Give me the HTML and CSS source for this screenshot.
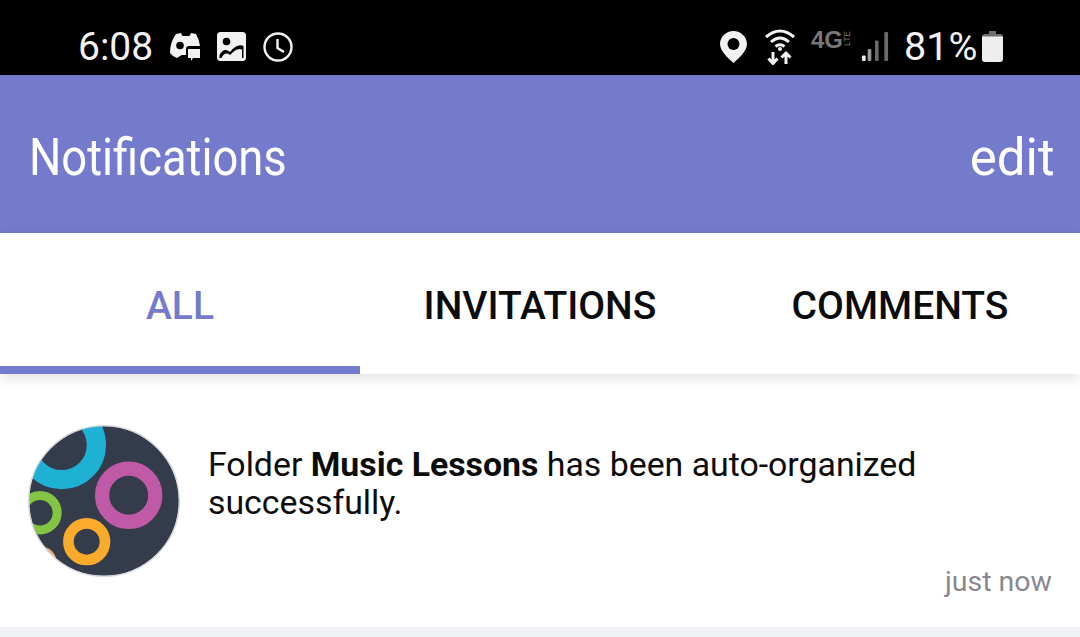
FILE: index.html
```html
<html>
    <head>
        <title>Notifications</title>
        <link rel="stylesheet" href="styles.css">
    </head>
    <body>
        <div class="status-bar">
            <div class="status-left">
                <span class="time">6:08</span>
                <svg class="icon-discord" width="31" height="28" viewBox="0 0 31 28">
                    <path d="M6 1 L11 0 L12.500 3 H19.500 L21 0 L26 1 Q29 6 30 13 H19 Q16 13 16 16 V22 H12 L10 23 L7 25 Q2 23 0 20 Q0 9 6 1Z" fill="#f2f2f2"/>
                    <circle cx="10" cy="12.500" r="3.800" fill="#000"/>
                    <path d="M18 16 H30 V25 H23 L21 28 V25 H18Z" fill="#f2f2f2"/>
                </svg>
                <svg class="icon-image" width="29" height="29" viewBox="0 0 29 29">
                    <rect width="29" height="29" rx="3.500" fill="#f2f2f2"/>
                    <circle cx="9.500" cy="9.500" r="3.800" fill="#000"/>
                    <path d="M2.500 26 V23 Q7 15 13 20 Q20 11 26.500 14 V26Z" fill="#000"/>
                    <path d="M4.500 26 Q8 19 13 23 Q20 15 25 17.500 V26Z" fill="#f2f2f2"/>
                </svg>
                <svg class="icon-clock" width="30" height="30" viewBox="0 0 30 30">
                    <circle cx="15" cy="15" r="13.500" fill="none" stroke="#f2f2f2" stroke-width="2.400"/>
                    <path d="M14.500 7 V16 L21 20" fill="none" stroke="#f2f2f2" stroke-width="2.400"/>
                </svg>
            </div>
            <div class="status-right">
                <svg class="icon-pin" width="27" height="32" viewBox="0 0 27 32">
                    <path d="M13.500 0 C21 0 27 6 27 13 C27 20 19 27 13.500 32 C8 27 0 20 0 13 C0 6 6 0 13.500 0Z" fill="#f2f2f2"/>
                    <circle cx="13.500" cy="13" r="6" fill="#000"/>
                </svg>
                <svg class="icon-wifi" width="30" height="37" viewBox="0 0 30 37">
                    <g fill="none" stroke="#f2f2f2" stroke-width="3">
                        <path d="M1 9 Q15 -3 29 9"/>
                        <path d="M6 14 Q15 6 24 14"/>
                        <path d="M10.500 18.500 Q15 15 19.500 18.500"/>
                    </g>
                    <circle cx="15" cy="21" r="2" fill="#f2f2f2"/>
                    <path d="M8 24 V35 M3.500 30.500 L8 35.500 L12.500 30.500 M21 36 V25 M16.500 29.500 L21 25 L25.500 29.500" fill="none" stroke="#f2f2f2" stroke-width="3"/>
                </svg>
                <div class="network">
                    <span class="network-4g">4G</span>
                    <span class="network-lte">LTE</span>
                </div>
                <svg class="icon-signal" width="27" height="30" viewBox="0 0 27 30">
                    <rect x="0" y="23.500" width="3.600" height="5.500" rx="1" fill="#f2f2f2"/>
                    <rect x="5.700" y="17" width="3.600" height="12" rx="1" fill="#9a9a9a"/>
                    <rect x="13" y="8.500" width="3.600" height="20.500" rx="1" fill="#6a6a6a"/>
                    <rect x="22.300" y="0" width="3.800" height="29" rx="1" fill="#6a6a6a"/>
                </svg>
                <span class="battery-level">81%</span>
                <svg class="icon-battery" width="21" height="31" viewBox="0 0 21 31">
                    <path d="M7 0 H14 V3 H18 Q21 3 21 6 V7 H0 V6 Q0 3 3 3 H7Z" fill="#6e6e6e"/>
                    <path d="M0 5.500 H21 V28 Q21 31 18 31 H3 Q0 31 0 28Z" fill="#eeeeee"/>
                </svg>
            </div>
        </div>
        <div class="app-header">
            <span class="app-title">Notifications</span>
            <span class="app-edit">edit</span>
        </div>
        <div class="tabs">
            <div class="tab tab-active">ALL</div>
            <div class="tab">INVITATIONS</div>
            <div class="tab">COMMENTS</div>
        </div>
        <div class="notification">
            <svg class="avatar" width="152" height="152" viewBox="0 0 152 152">
                <defs>
                    <clipPath id="avatar-clip"><circle cx="76" cy="76" r="75"/></clipPath>
                </defs>
                <g clip-path="url(#avatar-clip)">
                    <rect width="152" height="152" fill="#343b4b"/>
                    <circle cx="33.700" cy="20" r="34.700" fill="none" stroke="#1fb1d3" stroke-width="19.300"/>
                    <circle cx="100.700" cy="70.300" r="26.600" fill="none" stroke="#c05aa6" stroke-width="14.200"/>
                    <circle cx="12" cy="87.700" r="17.200" fill="none" stroke="#84c445" stroke-width="9"/>
                    <circle cx="58.700" cy="116.700" r="18.300" fill="none" stroke="#fbab2c" stroke-width="10.700"/>
                    <circle cx="13" cy="137" r="14" fill="none" stroke="#f4a27a" stroke-width="3"/>
                </g>
                <circle cx="76" cy="76" r="75.300" fill="none" stroke="#d5d8dc" stroke-width="1.400"/>
            </svg>
            <div class="notification-body">
                <p class="notification-text">Folder <b>Music Lessons</b> has been auto-organized successfully.</p>
                <div class="notification-time">just now</div>
            </div>
        </div>
        <div class="page-footer"></div>
    </body>
</html>
```

FILE: styles.css
```css
html, body{
    margin: 0;
    padding: 0;
}
body{
    width: 1080px;
    height: 637px;
    overflow: hidden;
    background-color: #fff;
    font-family: Roboto, "Liberation Sans", sans-serif;
}
.status-bar{
    display: flex;
    justify-content: space-between;
    align-items: center;
    height: 75px;
    background-color: #000;
    color: #f2f2f2;
    padding: 18px 77px 0 78px;
    box-sizing: border-box;
}
.status-left, .status-right{
    display: flex;
    align-items: center;
}
.time{
    font-size: 39px;
    width: 74px;
    margin-right: 18px;
}
.icon-discord{
    margin-right: 16px;
}
.icon-image{
    margin-right: 17px;
}
.icon-pin{
    margin-right: 18px;
}
.icon-wifi{
    margin-right: 16px;
    margin-top: -1px;
}
.network{
    display: flex;
    align-items: flex-start;
    width: 41px;
    margin-right: 10px;
    margin-top: -14px;
    color: #777;
    font-family: "Liberation Sans", sans-serif;
    font-weight: bold;
}
.network-4g{
    font-size: 24px;
    line-height: 17px;
    width: 33px;
}
.network-lte{
    font-size: 8.500px;
    line-height: 7px;
    writing-mode: vertical-rl;
    transform: rotate(180deg);
    font-weight: normal;
}
.icon-signal{
    margin-right: 15px;
}
.battery-level{
    font-size: 39.500px;
    width: 71px;
    margin-right: 7px;
}
.app-header{
    display: flex;
    justify-content: space-between;
    align-items: center;
    height: 158px;
    padding: 6px 25px 0 29px;
    background-color: #757bcc;
    color: #fff;
    box-sizing: border-box;
    font-size: 52px;
}
.app-title{
    display: inline-block;
    transform: scaleX(0.872);
    transform-origin: left center;
}
.app-edit{
    display: inline-block;
    transform: scaleX(0.98);
    transform-origin: right center;
}
.tabs{
    display: flex;
    height: 141px;
    box-shadow: 0 4px 12px rgba(0,0,0,0.12);
    position: relative;
}
.tab{
    flex: 1;
    display: flex;
    justify-content: center;
    align-items: center;
    padding-top: 13px;
    padding-bottom: 8px;
    box-sizing: border-box;
    font-size: 39px;
    font-weight: 500;
    color: #0c0c0c;
}
.tab-active{
    color: #757bcc;
    border-bottom: 8px solid #757bcc;
    padding-bottom: 0;
}
.notification{
    display: flex;
    height: 253px;
    padding: 51px 28px 0 28px;
    box-sizing: border-box;
}
.avatar{
    flex-shrink: 0;
    margin-right: 29px;
}
.notification-body{
    flex: 1;
    display: flex;
    flex-direction: column;
    justify-content: space-between;
    padding-bottom: 28px;
}
.notification-text{
    margin: 21px 0 0 -1px;
    font-size: 33.850px;
    line-height: 38px;
    color: #0c0c0c;
    max-width: 760px;
}
.notification-time{
    text-align: right;
    font-size: 28.500px;
    line-height: 34px;
    color: #8a888d;
}
.page-footer{
    height: 10px;
    background-color: #f0f2f5;
}
```
